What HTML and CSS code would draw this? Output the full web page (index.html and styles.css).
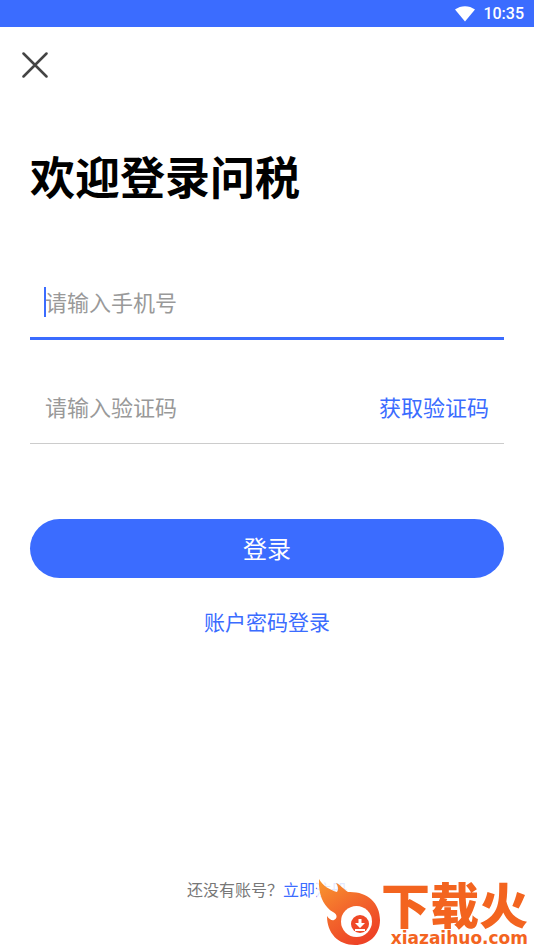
FILE: index.html
```html
<!DOCTYPE html>
<html lang="zh-CN">
<head>
<meta charset="utf-8">
<meta name="viewport" content="width=device-width, initial-scale=1">
<title>登录</title>
<link rel="stylesheet" href="styles.css">
</head>
<body>
<header class="status">
  <svg class="wifi" viewBox="0 0 20 16" aria-hidden="true"><path d="M0 3.600C5.800-1 14.200-1 20 3.600L10 15.600Z"/></svg>
  <time>10:35</time>
</header>
<main class="page">
  <button class="close" type="button" aria-label="关闭">
    <svg viewBox="0 0 26 26" aria-hidden="true"><path d="M1.500 1.500L24.500 24.500M24.500 1.500L1.500 24.500"/></svg>
  </button>
  <form class="login">
    <h1>欢迎登录问税</h1>
    <div class="field field-active">
      <span class="caret"></span>
      <input type="tel" placeholder="请输入手机号" aria-label="手机号">
    </div>
    <div class="field">
      <input type="text" placeholder="请输入验证码" aria-label="验证码">
      <button class="code" type="button">获取验证码</button>
    </div>
    <button class="submit" type="submit">登录</button>
    <a class="switch" href="#">账户密码登录</a>
  </form>
  <p class="register">还没有账号？<a href="#">立即注册</a></p>
</main>
<aside class="mark">
  <svg class="flame" viewBox="0 0 62 68" aria-hidden="true">
    <defs>
      <linearGradient id="fire" x1="0" y1="0" x2=".6" y2="1">
        <stop offset="0" stop-color="#f9982f"/>
        <stop offset=".5" stop-color="#f36a2c"/>
        <stop offset="1" stop-color="#ee4326"/>
      </linearGradient>
    </defs>
    <path fill="url(#fire)" d="M0 1C4 8 11 12 18 14C20 11 19 8 17 5C22 7 24 11 29 14C47 13 61 24 61 42C61 57 50 67 36 67C19 67 8 55 8 38C10 41 13 43 15 42C19 40 18 36 14 34C5 29-1 17 0 1Z"/>
    <circle cx="37.500" cy="43.500" r="15.500" fill="#fff"/>
    <circle cx="41" cy="46" r="9" fill="#ef4826"/>
    <path fill="#fff" d="M39.500 41h3v4h3.500l-5 5-5-5h3.500zM36 51h10v2h-10z"/>
  </svg>
  <div class="brand">
    <strong>下载火</strong>
    <span>xiazaihuo.com</span>
  </div>
</aside>
</body>
</html>
```
FILE: styles.css
```css
* { box-sizing: border-box; }
body {
  margin: 0;
  min-height: 100vh;
  display: flex;
  flex-direction: column;
  position: relative;
  background: #fff;
  font-family: "Noto Sans CJK SC", sans-serif;
}
button, input { font: inherit; border: 0; padding: 0; background: none; }
a { color: #3b6cff; text-decoration: none; }
.status {
  height: 27px;
  padding: 0 10px;
  display: flex;
  align-items: center;
  justify-content: flex-end;
  gap: 8px;
  background: #3b6cff;
  color: #fff;
  font: 500 16px/28px Roboto, sans-serif;
}
.wifi { width: 20px; height: 16px; fill: #fff; }
.page { flex: 1; display: flex; flex-direction: column; padding: 25px 30px 48px; }
.close { width: 26px; height: 26px; margin-left: -8px; }
.close svg { display: block; width: 26px; height: 26px; fill: none; stroke: #444; stroke-width: 2.5; stroke-linecap: round; }
.login { display: flex; flex-direction: column; margin-top: 68px; }
h1 { margin: 0 0 62px; font-size: 45px; line-height: 60px; font-weight: 700; color: #000; }
.field {
  position: relative;
  display: flex;
  align-items: center;
  height: 72px;
  padding: 0 15px 4px;
  border-bottom: 1px solid #ccc;
  font-size: 22px;
}
.field-active { border-bottom: 3px solid #3b6cff; margin-bottom: 32px; }
.field input { flex: 1; min-width: 0; height: 40px; outline: 0; }
.field input::placeholder { color: #999; opacity: 1; }
.caret { position: absolute; top: 19px; left: 14px; width: 2px; height: 30px; background: #3b6cff; }
.code { color: #3b6cff; }
.submit {
  height: 59px;
  margin-top: 75px;
  padding-bottom: 2px;
  border-radius: 30px;
  background: #3b6cff;
  color: #fff;
  font-size: 24px;
}
.switch { align-self: center; margin-top: 28px; font-size: 21px; line-height: 30px; }
.register { margin: auto 0 0; text-align: center; font-size: 16px; line-height: 24px; color: #777; }
.mark {
  position: absolute;
  right: 0;
  bottom: 0;
  display: flex;
  padding: 0 6px 3px 2px;
  background: rgba(255, 255, 255, 0.85);
  color: #f3641f;
}
.flame { width: 62px; height: 68px; }
.brand { display: flex; flex-direction: column; justify-content: flex-end; }
.brand strong { font-size: 49px; line-height: 48px; font-weight: 900; }
.brand span { font: 700 17px/16px "DejaVu Sans", sans-serif; text-align: right; padding-top: 3px; }
```
